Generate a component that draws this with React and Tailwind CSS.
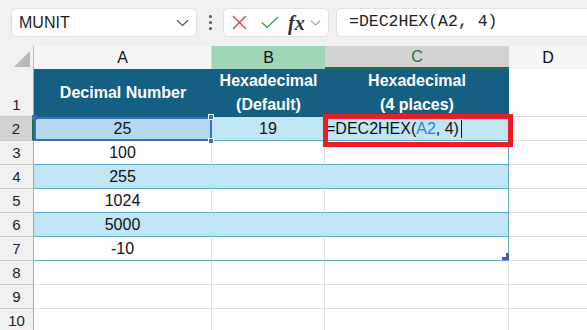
import React from 'react'

const rows = [
  { n: 2, a: '25', b: '19', band: true, active: true },
  { n: 3, a: '100', band: false },
  { n: 4, a: '255', band: true },
  { n: 5, a: '1024', band: false },
  { n: 6, a: '5000', band: true },
  { n: 7, a: '-10', band: false, last: true },
]

const empty = [8, 9, 10]

function Chevron({ className }) {
  return (
    <svg className={className} width="13" height="8" viewBox="0 0 13 8" fill="none">
      <path d="M1 1.2 L6.5 6.5 L12 1.2" stroke="currentColor" strokeWidth="1.2" />
    </svg>
  )
}

function RowHead({ n, active, tall }) {
  return (
    <div
      className={`w-[34px] shrink-0 flex items-end justify-center border-b border-[#c8c8c8] text-[15px] leading-[22px] text-[#222] ${
        active ? 'bg-[#d2d2d2] border-r-2 border-r-[#1e6f42]' : 'bg-[#f0f0f0] border-r border-r-[#a9a9a9]'
      } ${tall ? 'h-[48px]' : 'h-[24px]'}`}
    >
      {n}
    </div>
  )
}

export default function App() {
  return (
    <div className="w-[587px] h-[330px] overflow-hidden bg-white font-['Liberation_Sans',Arial,sans-serif] text-[#111]">
      {/* formula bar */}
      <div className="h-[46px] bg-[#f0f0f0] flex items-start pt-[8px] pl-[11px]">
        <div className="w-[186px] h-[29px] bg-white rounded-[5px] border border-[#e2e2e2] flex items-center pl-[7px] pr-[7px]">
          <span className="text-[16px] text-[#1f1f1f] flex-1">MUNIT</span>
          <Chevron className="text-[#555]" />
        </div>
        <div className="w-[26px] h-[29px] flex flex-col items-center justify-center gap-[3px]">
          <span className="w-[3px] h-[3px] rounded-full bg-[#555]" />
          <span className="w-[3px] h-[3px] rounded-full bg-[#555]" />
          <span className="w-[3px] h-[3px] rounded-full bg-[#555]" />
        </div>
        <div className="w-[106px] h-[29px] bg-white rounded-[5px] border border-[#e2e2e2] flex items-center pl-[8px]">
          <svg width="15" height="15" viewBox="0 0 15 15" fill="none">
            <path d="M1 1 L14 14 M14 1 L1 14" stroke="#e23c3c" strokeWidth="1.4" />
          </svg>
          <svg className="ml-[14px]" width="18" height="13" viewBox="0 0 18 13" fill="none">
            <path d="M1 6.5 L6 11.5 L17 1" stroke="#3ea856" strokeWidth="1.5" />
          </svg>
          <span className="ml-[9px] font-['Liberation_Serif',serif] italic font-bold text-[20px] leading-none text-[#333]">fx</span>
          <Chevron className="ml-[5px] text-[#9a9a9a] w-[11px]" />
        </div>
        <div className="ml-[7px] flex-1 h-[29px] bg-white rounded-l-[5px] border border-r-0 border-[#e2e2e2] flex items-center pl-[12px]">
          <span className="font-['Liberation_Mono',monospace] text-[16.5px] text-[#1f1f1f]">=DEC2HEX(A2, 4)</span>
        </div>
      </div>

      {/* grid */}
      <div className="relative">
        {/* column headers */}
        <div className="flex h-[23px] text-[16px]">
          <div className="w-[34px] shrink-0 bg-[#f0f0f0] border-r border-[#bdbdbd] flex items-end justify-end pr-[3px] pb-[2px]">
            <svg width="16" height="16" viewBox="0 0 16 16">
              <polygon points="16,0 16,16 0,16" fill="#b8b8b8" />
            </svg>
          </div>
          <div className="w-[178px] shrink-0 bg-[#f5f5f5] border-r border-[#d6d6d6] flex items-center justify-center">A</div>
          <div className="w-[113px] shrink-0 bg-[#9fd5b6] flex items-center justify-center">B</div>
          <div className="w-[184px] shrink-0 bg-[#d2d2d2] border-b-2 border-[#1e6f42] flex items-center justify-center text-[#1e6f42]">C</div>
          <div className="flex-1 bg-[#f5f5f5] flex items-center justify-center">D</div>
        </div>

        {/* row 1: table header */}
        <div className="flex h-[48px]">
          <RowHead n={1} tall />
          <div className="w-[178px] shrink-0 bg-[#156082] text-white font-bold text-[16px] flex items-center justify-center">
            Decimal Number
          </div>
          <div className="w-[113px] shrink-0 bg-[#156082] text-white font-bold text-[16px] leading-[24px] flex flex-col items-center justify-center">
            <span>Hexadecimal</span>
            <span>(Default)</span>
          </div>
          <div className="w-[184px] shrink-0 bg-[#156082] text-white font-bold text-[16px] leading-[24px] flex flex-col items-center justify-center">
            <span>Hexadecimal</span>
            <span>(4 places)</span>
          </div>
          <div className="flex-1 border-b border-[#e1e1e1]" />
        </div>

        {/* data rows */}
        {rows.map((r) => (
          <div key={r.n} className="flex h-[24px] text-[16px]">
            <RowHead n={r.n} active={r.active} />
            <div
              className={`w-[178px] shrink-0 border-b border-b-[#5ba6d8] border-r flex items-center justify-center ${
                r.active
                  ? 'bg-[#b3d8ef] border-r-[#b3d8ef]'
                  : r.band
                  ? 'bg-[#c0e6f5] border-r-[#c0e6f5]'
                  : 'bg-white border-r-[#e1e1e1]'
              }`}
            >
              {r.a}
            </div>
            <div
              className={`w-[113px] shrink-0 border-b border-b-[#5ba6d8] border-r flex items-center justify-center ${
                r.band ? 'bg-[#c0e6f5] border-r-[#c0e6f5]' : 'bg-white border-r-[#e1e1e1]'
              }`}
            >
              {r.b}
            </div>
            <div
              className={`w-[184px] shrink-0 border-b border-b-[#5ba6d8] border-r border-r-[#5ba6d8] flex items-center pl-[1px] ${
                r.band ? 'bg-[#c0e6f5]' : 'bg-white'
              }`}
            >
              {r.active && (
                <span className="flex items-center">
                  =DEC2HEX(<span className="text-[#3b7dd0]">A2</span>, 4)
                  <span className="ml-[2px] w-[1px] h-[18px] bg-[#111]" />
                </span>
              )}
            </div>
            <div className="flex-1 border-b border-[#e1e1e1]" />
          </div>
        ))}

        {/* empty rows */}
        {empty.map((n) => (
          <div key={n} className="flex h-[24px]">
            <RowHead n={n} />
            <div className="w-[178px] shrink-0 border-b border-r border-[#e1e1e1]" />
            <div className="w-[113px] shrink-0 border-b border-r border-[#e1e1e1]" />
            <div className="w-[184px] shrink-0 border-b border-r border-[#e1e1e1]" />
            <div className="flex-1 border-b border-[#e1e1e1]" />
          </div>
        ))}

        {/* range reference highlight on A2 */}
        <div className="absolute left-[34px] top-[71px] w-[178px] h-[24px] border-2 border-[#3b6fc4] pointer-events-none" />
        <div className="absolute left-[32px] top-[69px] w-[5px] h-[5px] bg-[#3b6fc4]" />
        <div className="absolute left-[208px] top-[68px] w-[6px] h-[6px] bg-[#3b6fc4] border border-white" />
        <div className="absolute left-[208px] top-[92px] w-[6px] h-[6px] bg-[#3b6fc4] border border-white" />

        {/* red annotation box */}
        <div className="absolute left-[323px] top-[68px] w-[190px] h-[33px] border-[5px] border-[#ec1c24] pointer-events-none" />

        {/* table resize handle */}
        <svg className="absolute left-[502px] top-[207px]" width="7" height="7" viewBox="0 0 7 7">
          <polygon points="4,0 7,0 7,7 0,7 0,4 4,4" fill="#4a58b4" />
        </svg>
      </div>
    </div>
  )
}
